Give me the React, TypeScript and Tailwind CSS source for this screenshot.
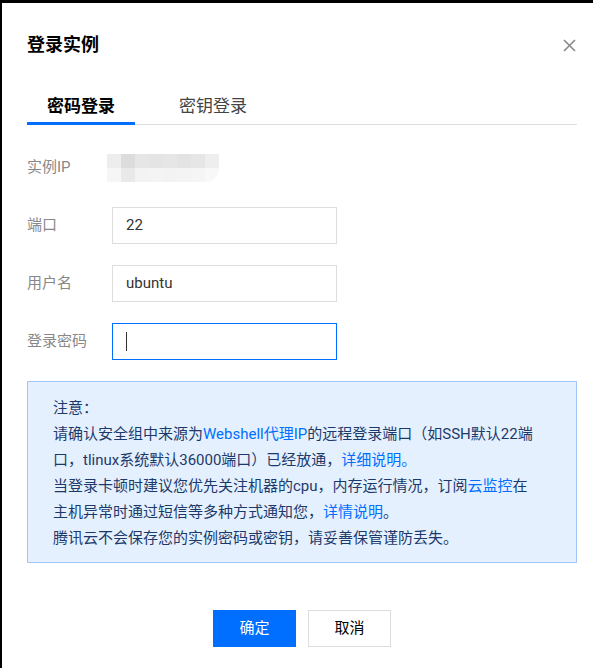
import React from 'react';

const FONT = { fontFamily: 'Roboto, "Noto Sans CJK SC", sans-serif' };

// pixelated blur that hides the instance IP
const BlurredIp: React.FC = () => {
  const top = ['#ededed', '#dcdcdc', '#e6e6e6', '#e4e4e4', '#e6e6e6', '#e3e3e3', '#e6e6e6', '#eeeeee'];
  const bottom = ['#f6f6f6', '#e9e9e9', '#f3f3f3', '#f4f4f4', '#f3f3f3', '#f4f4f4', '#f5f5f5', '#f8f8f8'];
  return (
    <div className="flex flex-col overflow-hidden rounded-br-[14px]">
      <div className="flex h-[14px]">
        {top.map((c, i) => (
          <div key={i} className="h-full w-[14px]" style={{ background: c }} />
        ))}
      </div>
      <div className="flex h-[14px]">
        {bottom.map((c, i) => (
          <div key={i} className="h-full w-[14px]" style={{ background: c }} />
        ))}
      </div>
    </div>
  );
};

const Field: React.FC<{ label: string; children: React.ReactNode }> = ({ label, children }) => (
  <div className="flex h-[37px] items-center">
    <div className="w-[85px] text-[15px] text-[#888]">{label}</div>
    {children}
  </div>
);

const Link: React.FC<{ children: React.ReactNode }> = ({ children }) => (
  <span className="text-[#006eff]">{children}</span>
);

export default function App() {
  return (
    <div className="h-[668px] w-[593px] bg-black pl-[2px] pt-[3px]" style={FONT}>
      <div className="flex h-full flex-col bg-white pl-[25px] pr-[16px]">
        {/* header */}
        <div className="mt-[30px] flex h-[24px] items-center justify-between">
          <h1 className="text-[18px] font-bold leading-[24px] text-[#000]">登录实例</h1>
          <svg width="13" height="13" viewBox="0 0 13 13" className="mr-[1px]">
            <path d="M1 1 L12 12 M12 1 L1 12" stroke="#888" strokeWidth="1.6" />
          </svg>
        </div>

        {/* tabs */}
        <div className="mt-[37px] flex border-b border-[#ddd]">
          <div className="-mb-px border-b-[3px] border-[#006eff] px-[20px] pb-[4px] text-[17px] font-bold leading-[24px] text-black">
            密码登录
          </div>
          <div className="ml-[24px] px-[20px] pb-[4px] text-[17px] leading-[24px] text-[#444]">密钥登录</div>
        </div>

        {/* form */}
        <div className="mt-[24px] flex flex-col gap-[21px]">
          <div className="flex h-[37px] items-center">
            <div className="w-[80px] text-[15px] text-[#888]">实例IP</div>
            <BlurredIp />
          </div>
          <Field label="端口">
            <div className="flex h-[37px] w-[225px] items-center border border-[#ddd] px-[13px] text-[15px] text-[#333]">22</div>
          </Field>
          <Field label="用户名">
            <div className="flex h-[37px] w-[225px] items-center border border-[#ddd] px-[13px] text-[15px] text-[#333]">ubuntu</div>
          </Field>
          <Field label="登录密码">
            <div className="flex h-[37px] w-[225px] items-center border border-[#006eff] px-[13px]">
              <div className="h-[19px] w-px bg-[#333]" />
            </div>
          </Field>
        </div>

        {/* notice */}
        <div className="mt-[21px] h-[182px] border border-[#a3c8f8] bg-[#e5f0fe] pl-[25px] pt-[13px] text-[15px] leading-[26px] text-[#1b3a6b]">
          <div>注意：</div>
          <div className="whitespace-nowrap">
            请确认安全组中来源为<Link>Webshell代理IP</Link>的远程登录端口（如SSH默认22端
          </div>
          <div className="whitespace-nowrap">
            口，tlinux系统默认36000端口）已经放通，<Link>详细说明。</Link>
          </div>
          <div className="whitespace-nowrap">
            当登录卡顿时建议您优先关注机器的cpu，内存运行情况，订阅<Link>云监控</Link>在
          </div>
          <div className="whitespace-nowrap">
            主机异常时通过短信等多种方式通知您，<Link>详情说明</Link>。
          </div>
          <div className="whitespace-nowrap">腾讯云不会保存您的实例密码或密钥，请妥善保管谨防丢失。</div>
        </div>

        {/* footer */}
        <div className="mt-[47px] flex justify-center gap-[12px]">
          <button className="h-[37px] w-[83px] bg-[#006eff] text-[15px] text-white">确定</button>
          <button className="h-[37px] w-[83px] border border-[#ddd] bg-white text-[15px] text-black">取消</button>
        </div>
      </div>
    </div>
  );
}
